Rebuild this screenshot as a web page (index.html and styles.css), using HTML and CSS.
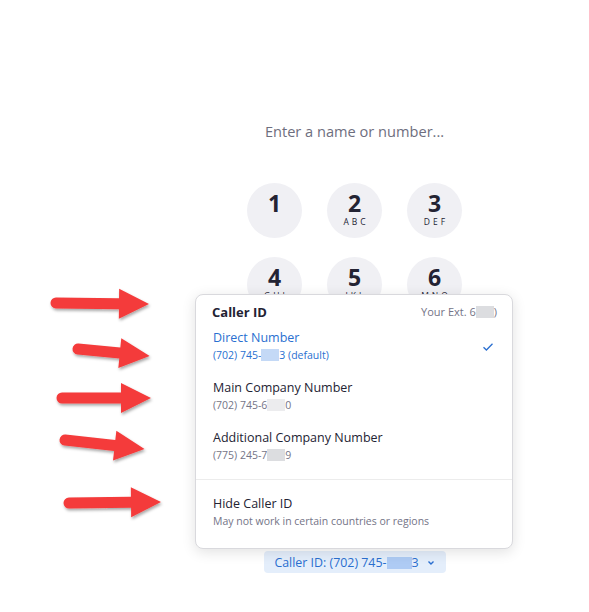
FILE: index.html
```html
<!DOCTYPE html>
<html>
<head lang="en">
    <meta charset="UTF-8">
    <title>Phone - Caller ID</title>
    <link rel="stylesheet" href="styles.css">
</head>
<body>
<div id="app">
    <div class="dialer">
        <div class="search">Enter a name or number...</div>
        <ul class="keypad">
            <li><b>1</b><span>&nbsp;</span></li>
            <li><b>2</b><span>ABC</span></li>
            <li><b>3</b><span>DEF</span></li>
            <li><b>4</b><span>GHI</span></li>
            <li><b>5</b><span>JKL</span></li>
            <li><b>6</b><span>MNO</span></li>
        </ul>
        <div class="caller-btn">
            <span>Caller ID: (702) 745-<i class="blur blue wide"></i>3</span>
            <svg class="chev" width="8" height="6" viewBox="0 0 8 6"><path d="M1.5 1.5 L4 4 L6.5 1.5" fill="none" stroke="#2a6fd0" stroke-width="1.4"/></svg>
        </div>
    </div>

    <!-- caller id menu, opened over the keypad -->
    <div class="menu">
        <div class="menu-head">
            <span class="menu-title">Caller ID</span>
            <span class="ext">Your Ext. 6<i class="blur"></i>)</span>
        </div>
        <div class="item selected">
            <div class="item-text">
                <div class="name">Direct Number</div>
                <div class="num">(702) 745-<i class="blur blue"></i>3 (default)</div>
            </div>
            <svg class="check" width="12" height="10" viewBox="0 0 12 10"><path d="M1.5 5.2 L4.4 8 L10.5 1.8" fill="none" stroke="#2a6fd0" stroke-width="1.3"/></svg>
        </div>
        <div class="item">
            <div class="item-text">
                <div class="name">Main Company Number</div>
                <div class="num">(702) 745-6<i class="blur light"></i>0</div>
            </div>
        </div>
        <div class="item">
            <div class="item-text">
                <div class="name">Additional Company Number</div>
                <div class="num">(775) 245-7<i class="blur"></i>9</div>
            </div>
        </div>
        <div class="divider"></div>
        <div class="item last">
            <div class="item-text">
                <div class="name">Hide Caller ID</div>
                <div class="num">May not work in certain countries or regions</div>
            </div>
        </div>
    </div>

    <!-- red annotation arrows -->
    <svg class="arrows" width="589" height="612" viewBox="0 0 589 612">
        <defs>
            <filter id="sh" x="-20%" y="-50%" width="140%" height="200%">
                <feDropShadow dx="1" dy="2" stdDeviation="1.6" flood-color="#000" flood-opacity="0.35"/>
            </filter>
        </defs>
        <g fill="#f43b3b" filter="url(#sh)">
            <path d="M0 -5.5 L63 -5.5 L63 -15 L93 0 L63 15 L63 5.5 L0 5.5 A5.5 5.5 0 0 1 0 -5.5 Z" transform="translate(56 303) rotate(0.6)"/>
            <path d="M0 -5.5 L42 -5.5 L42 -15 L72 0 L42 15 L42 5.5 L0 5.5 A5.5 5.5 0 0 1 0 -5.5 Z" transform="translate(78 349) rotate(5.6)"/>
            <path d="M0 -5.5 L59 -5.5 L59 -15 L89 0 L59 15 L59 5.5 L0 5.5 A5.5 5.5 0 0 1 0 -5.5 Z" transform="translate(62 398)"/>
            <path d="M0 -5.5 L50 -5.5 L50 -15 L80 0 L50 15 L50 5.5 L0 5.5 A5.5 5.5 0 0 1 0 -5.5 Z" transform="translate(65 440) rotate(6.4)"/>
            <path d="M0 -5.5 L62 -5.5 L62 -15 L92 0 L62 15 L62 5.5 L0 5.5 A5.5 5.5 0 0 1 0 -5.5 Z" transform="translate(69 503) rotate(-0.6)"/>
        </g>
    </svg>
</div>
</body>
</html>
```

FILE: styles.css
```css
* {
    margin: 0;
    padding: 0;
    box-sizing: border-box;
}

ul {
    list-style: none;
}

body {
    background: #fff;
    font-family: "Open Sans", "Noto Sans", sans-serif;
    color: #232333;
}

#app {
    position: relative;
    width: 589px;
    height: 612px;
    overflow: hidden;
}

.dialer {
    display: flex;
    flex-direction: column;
    align-items: center;
    padding-left: 120px;
    padding-top: 121px;
}

.search {
    font-size: 14.6px;
    line-height: 20px;
    color: #6e6e7e;
}

.keypad {
    display: grid;
    grid-template-columns: repeat(3, 55px);
    column-gap: 25px;
    row-gap: 19px;
    margin-top: 42px;
}

.keypad li {
    width: 55px;
    height: 55px;
    border-radius: 50%;
    background: #f0f0f4;
    display: flex;
    flex-direction: column;
    align-items: center;
    justify-content: center;
    padding-bottom: 4px;
}

.keypad b {
    font-size: 23px;
    line-height: 24px;
    font-weight: 700;
    color: #232333;
}

.keypad span {
    font-size: 8.5px;
    line-height: 11px;
    letter-spacing: 3px;
    margin-right: -3px;
    margin-top: 1px;
    color: #232333;
}

.caller-btn {
    margin-top: 239px;
    width: 182px;
    height: 22px;
    border-radius: 4px;
    background: #e4eefb;
    color: #2a6fd0;
    font-size: 12.4px;
    display: flex;
    align-items: center;
    justify-content: center;
    gap: 8px;
}

.chev {
    margin-top: 1px;
}

.blur {
    display: inline-block;
    width: 18px;
    height: 12px;
    vertical-align: -2px;
    background: #dcdde0;
}

.blur.light {
    background: #ececee;
}

.blur.blue {
    background: #c4d9f6;
}

.blur.wide {
    width: 25px;
    background: #aecbf4;
}

.menu {
    position: absolute;
    left: 195px;
    top: 294px;
    width: 318px;
    background: #fff;
    border: 1px solid #d9d9dd;
    border-radius: 8px;
    box-shadow: 0 3px 14px rgba(0, 0, 0, 0.12);
    padding: 7px 0 19px;
}

.menu-head {
    display: flex;
    justify-content: space-between;
    align-items: center;
    padding: 0 15px 0 16px;
    height: 19px;
}

.menu-title {
    font-size: 13px;
    font-weight: 700;
}

.ext {
    font-size: 11px;
    color: #747487;
}

.item {
    display: flex;
    align-items: center;
    justify-content: space-between;
    padding: 8px 18px 8px 17px;
}

.item.last {
    padding-top: 15px;
    padding-bottom: 0;
}

.name {
    font-size: 12.5px;
    line-height: 18px;
}

.num {
    font-size: 10.5px;
    line-height: 16px;
    color: #747487;
}

.selected .name,
.selected .num {
    color: #2a6fd0;
}

.check {
    margin-top: 2px;
}

.divider {
    height: 1px;
    background: #ececec;
    margin-top: 8px;
}

.arrows {
    position: absolute;
    left: 0;
    top: 0;
}
```
